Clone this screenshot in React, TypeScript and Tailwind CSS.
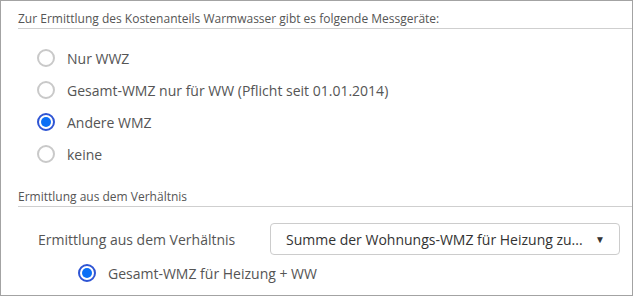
import React from 'react';

function Radio({ checked, label }: { checked?: boolean; label: string }) {
  return (
    <div className="flex items-center h-[32px]">
      <span
        className={`w-[18px] h-[18px] rounded-full flex items-center justify-center shrink-0 ${
          checked ? 'border-2 border-[#2f55d4] bg-white' : 'border-2 border-[#c9c9c9] bg-white'
        }`}
      >
        {checked && <span className="w-[10px] h-[10px] rounded-full bg-[#0b6ff5]" />}
      </span>
      <span className="ml-[12px] text-[14px] text-[#555]">{label}</span>
    </div>
  );
}

export default function App() {
  return (
    <div className="w-[633px] h-[296px] border border-[#a3a3a3] bg-white overflow-hidden" style={{ fontFamily: '"Open Sans", sans-serif' }}>
      <div className="pl-[17px] pt-[10px]">
        <div className="text-[12px] text-[#555] leading-[16px] pb-[1px] border-b border-[#cfcfcf]">
          Zur Ermittlung des Kostenanteils Warmwasser gibt es folgende Messgeräte:
        </div>

        <div className="pl-[19px] pt-[13px]">
          <Radio label="Nur WWZ" />
          <Radio label="Gesamt-WMZ nur für WW (Pflicht seit 01.01.2014)" />
          <Radio checked label="Andere WMZ" />
          <Radio label="keine" />
        </div>

        <div className="mt-[19px] text-[12px] text-[#555] leading-[16px] pb-[1px] border-b border-[#cfcfcf]">
          Ermittlung aus dem Verhältnis
        </div>

        <div className="flex items-center pl-[20px] mt-[16px]">
          <div className="w-[232px] text-[14px] text-[#555]">Ermittlung aus dem Verhältnis</div>
          <div className="w-[350px] h-[32px] border border-[#cccccc] rounded-[4px] flex items-center pl-[15px] pr-[14px] justify-between">
            <span className="text-[14px] text-[#333]">Summe der Wohnungs-WMZ für Heizung zu...</span>
            <span className="text-[10px] text-[#333]">▼</span>
          </div>
        </div>

        <div className="pl-[60px] mt-[2px]">
          <Radio checked label="Gesamt-WMZ für Heizung + WW" />
        </div>
      </div>
    </div>
  );
}
